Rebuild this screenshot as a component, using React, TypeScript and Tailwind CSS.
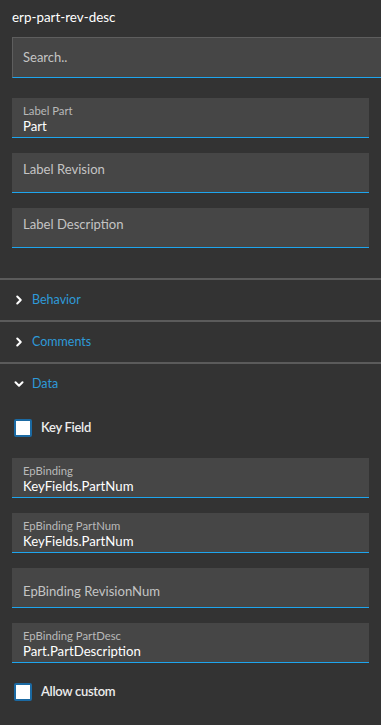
import { ChevronRight, ChevronDown } from "lucide-react";

function FilledField({ label, value }: { label: string; value: string }) {
    return (
        <div className="h-[40px] bg-[#464646] border-b border-[#1ea5ee] px-[11px] flex flex-col">
            <div className="text-[11.3px] leading-[14px] text-[#b9b9b9] pt-[6px]">{label}</div>
            <div className="text-[13.2px] leading-[18px] text-white -mt-[1px]">{value}</div>
        </div>
    );
}

function EmptyField({ label, offset }: { label: string; offset: "top" | "low" }) {
    return (
        <div className="h-[40px] bg-[#464646] border-b border-[#1ea5ee] px-[11px]">
            <div
                className={
                    offset === "top"
                        ? "text-[13.1px] leading-[18px] text-[#c4c4c4] pt-[7px]"
                        : "text-[13.1px] leading-[18px] text-[#c4c4c4] pt-[14px]"
                }
            >
                {label}
            </div>
        </div>
    );
}

function Section({ title, open }: { title: string; open?: boolean }) {
    return (
        <div className="h-[42px] flex items-center pl-[12px] gap-[6px] border-t-2 border-[#5b5b5b]">
            {open ? (
                <ChevronDown size={14} strokeWidth={3.5} className="text-white" />
            ) : (
                <ChevronRight size={14} strokeWidth={3.5} className="text-white" />
            )}
            <span className="text-[12.5px] text-[#2e9ad8]">{title}</span>
        </div>
    );
}

function Check({ label }: { label: string }) {
    return (
        <div className="flex items-center h-[18px] pl-[14px] gap-[9px]">
            <div className="w-[18px] h-[18px] bg-white border-2 border-[#1b6aa3] rounded-[2px]" />
            <span className="text-[13px] font-semibold text-[#ececec] tracking-[-0.3px]">{label}</span>
        </div>
    );
}

export default function App() {
    return (
        <div
            className="w-[381px] h-[725px] bg-[#333333] overflow-hidden"
            style={{ fontFamily: "Lato, 'Noto Sans', sans-serif" }}
        >
            {/* Title */}
            <div className="h-[37px] px-3 pt-[7px] text-[13.4px] leading-[20px] text-white">erp-part-rev-desc</div>

            {/* Search */}
            <div className="ml-3 w-[380px] h-[41px] bg-[#464646] border border-[#5e5e5e] border-b-[#1ea5ee] flex items-center px-[10px]">
                <span className="text-[13px] text-[#c4c4c4]">Search..</span>
            </div>

            {/* Labels */}
            <div className="px-3 pt-[20px] flex flex-col gap-[15px]">
                <FilledField label="Label Part" value="Part" />
                <EmptyField label="Label Revision" offset="top" />
                <EmptyField label="Label Description" offset="top" />
            </div>

            {/* Sections */}
            <div className="mt-[30px]">
                <Section title="Behavior" />
                <Section title="Comments" />
                <Section title="Data" open />
            </div>

            {/* Data content */}
            <div className="pt-[15px]">
                <Check label="Key Field" />
                <div className="px-3 pt-[21px] flex flex-col gap-[15px]">
                    <FilledField label="EpBinding" value="KeyFields.PartNum" />
                    <FilledField label="EpBinding PartNum" value="KeyFields.PartNum" />
                    <EmptyField label="EpBinding RevisionNum" offset="low" />
                    <FilledField label="EpBinding PartDesc" value="Part.PartDescription" />
                </div>
                <div className="pt-[20px]">
                    <Check label="Allow custom" />
                </div>
            </div>
        </div>
    );
}
